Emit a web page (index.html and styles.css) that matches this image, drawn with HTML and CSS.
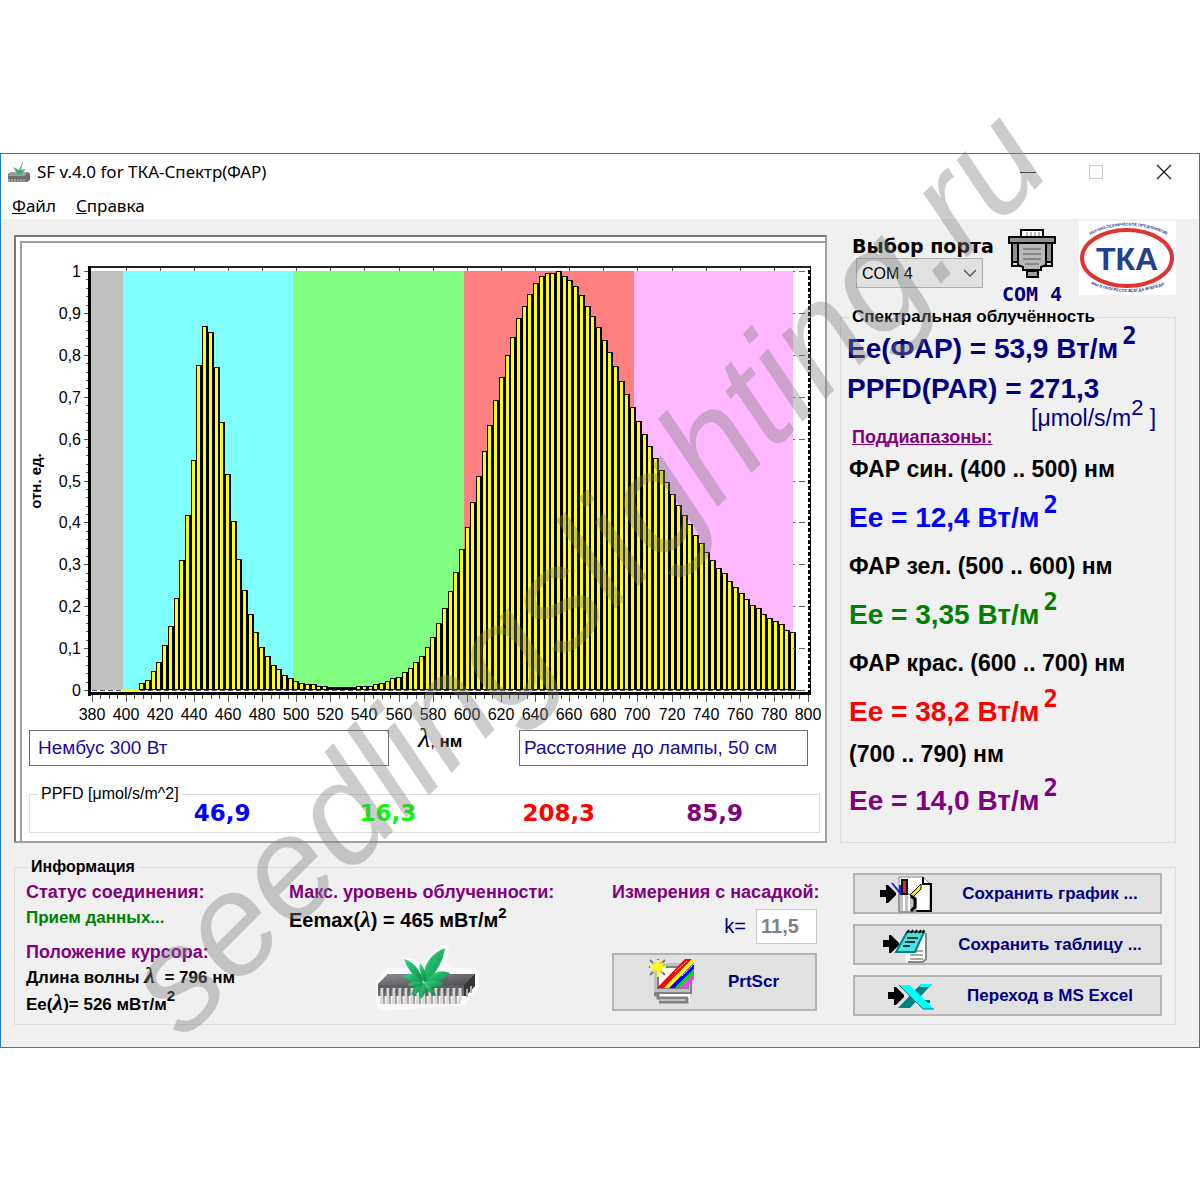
FILE: index.html
```html
<!DOCTYPE html>
<html lang="ru">
<head>
<meta charset="utf-8">
<meta name="viewport" content="width=device-width, initial-scale=1">
<title>SF v.4.0 for ТКА-Спектр(ФАР)</title>
<link rel="stylesheet" href="styles.css">
</head>
<body>
<svg class="defs" width="0" height="0" aria-hidden="true">
  <defs>
    <linearGradient id="chipTop" x1="0" y1="0" x2="1" y2="1"><stop offset="0" stop-color="#8b8d90"/><stop offset="1" stop-color="#4b4d50"/></linearGradient>
    <linearGradient id="chipFront" x1="0" y1="0" x2="0" y2="1"><stop offset="0" stop-color="#3a3c3e"/><stop offset="1" stop-color="#77797c"/></linearGradient>
    <linearGradient id="leaf" x1="0" y1="0" x2="1" y2="1"><stop offset="0" stop-color="#35d584"/><stop offset="1" stop-color="#0a8a48"/></linearGradient>
    <symbol id="arrow" viewBox="0 0 16 18"><path d="M0 5h6V0h2l8 8v2l-8 8H6v-6H0z"/></symbol>
  </defs>
</svg>
<div class="window">
  <header class="titlebar">
    <svg class="app-icon" viewBox="0 0 24 22" aria-hidden="true">
      <path d="M4 11h17l2 2v6l-3 2H1v-8z" fill="#6d7072"/><path d="M4 11h17l-3 4H1z" fill="#9b9ea0"/>
      <path d="M2 21v-3M5 21v-3M8 21v-3M11 21v-3M14 21v-3M17 21v-3" stroke="#c9c9c9"/>
      <path d="M11 14L6 6l6 3 4-9-2 9 5-1-6 6z" fill="#3fae74"/>
    </svg>
    <h1 class="title">SF v.4.0 for ТКА-Спектр(ФАР)</h1>
    <div class="caption-buttons">
      <button class="cap" aria-label="Свернуть"><svg viewBox="0 0 16 16"><path d="M0 8.500h16" stroke="#222"/></svg></button>
      <button class="cap" aria-label="Развернуть" disabled><svg viewBox="0 0 16 16"><path d="M1.500 1.500h13v13h-13z" fill="none" stroke="#c8c8c8"/></svg></button>
      <button class="cap" aria-label="Закрыть"><svg viewBox="0 0 16 16"><path d="M1 1l14 14M15 1L1 15" stroke="#222" stroke-width="1.4"/></svg></button>
    </div>
  </header>
  <nav class="menu"><a href="#file"><u>Ф</u>айл</a><a href="#help"><u>С</u>правка</a></nav>

  <main class="client">
    <section class="chart-panel">
      <div class="chart-inner">
        <svg id="chart" class="chart" viewBox="22 243 803 481" role="img" aria-label="Спектр излучения, отн. ед."></svg>
        <div class="notes">
          <input class="note" type="text" value="Нембус 300 Вт" aria-label="Название лампы">
          <span class="axis-x"><i>λ</i>, <b>нм</b></span>
          <input class="note note-short" type="text" value="Расстояние до лампы, 50 см" aria-label="Комментарий">
        </div>
        <fieldset class="group ppfd">
          <legend>PPFD [μmol/s/m^2]</legend>
          <div class="ppfd-grid">
            <output class="blue">46,9</output><output class="lime">16,3</output><output class="red">208,3</output><output class="purple">85,9</output>
          </div>
        </fieldset>
      </div>
    </section>

    <section class="side">
      <div class="port">
        <div class="port-select">
          <label for="port">Выбор порта</label>
          <div class="select-box">
            <select id="port"><option>COM 4</option></select>
            <svg class="chevron" viewBox="0 0 12 8" aria-hidden="true"><path d="M0 1l6 6 6-6" fill="none" stroke="#555" stroke-width="1.4"/></svg>
          </div>
        </div>
        <div class="port-state">
          <svg class="plug" viewBox="0 0 48 50" aria-hidden="true">
            <path d="M13 1h22v9H13z" fill="#fff" stroke="#000" stroke-width="2"/>
            <path d="M19 3v4M23 3v4M27 3v4M31 3v4" stroke="#777"/>
            <path d="M4 13h7v24H4zM37 13h7v24h-7z" fill="#909090" stroke="#000" stroke-width="2"/>
            <path d="M4 33h7v4H4zM37 33h7v4h-7z" fill="#ddd" stroke="#000" stroke-width="2"/>
            <path d="M10 14h28v22l-5 2v3H15v-3l-5-2z" fill="#b8b8b8" stroke="#000" stroke-width="2"/>
            <path d="M1 8h46v6H1z" fill="#909090" stroke="#000" stroke-width="2"/>
            <path d="M19 42h11v6H19z" fill="#a0a0a0" stroke="#000" stroke-width="2"/>
            <path d="M15 20h18M15 25h18M15 30h18M17 35h14" stroke="#555"/>
          </svg>
          <span>COM 4</span>
        </div>
        <svg class="logo" viewBox="0 0 97 74" role="img" aria-label="ТКА">
          <path d="M0 0h97v74H0z" fill="#fff"/>
          <ellipse cx="48" cy="37" rx="45" ry="28" fill="none" stroke="#e03434" stroke-width="4"/>
          <path id="arcTop" d="M11 14Q48 -5 88 14" fill="none"/>
          <path id="arcBottom" d="M12 63Q48 79 88 63" fill="none"/>
          <text class="logo-small"><textPath href="#arcTop">НАУЧНО-ТЕХНИЧЕСКОЕ ПРЕДПРИЯТИЕ</textPath></text>
          <text class="logo-small"><textPath href="#arcBottom">МЫ В ПРОГРЕССЕ ВСЕГДА ВПЕРЕДИ</textPath></text>
          <text class="logo-name" x="48" y="49" text-anchor="middle">ТКА</text>
        </svg>
      </div>

      <fieldset class="group readings">
        <legend>Спектральная облучённость</legend>
        <p class="main-value">Ee(ФАР) = 53,9 Вт/м<sup>2</sup></p>
        <p class="main-value main-par">PPFD(PAR) = 271,3</p>
        <p class="unit">[μmol/s/m<sup>2</sup> ]</p>
        <h2 class="sub">Поддиапазоны:</h2>
        <dl class="bands">
          <dt>ФАР син. (400 .. 500) нм</dt><dd class="blue">Ee = 12,4 Вт/м<sup>2</sup></dd>
          <dt>ФАР зел. (500 .. 600) нм</dt><dd class="green">Ee = 3,35 Вт/м<sup>2</sup></dd>
          <dt>ФАР крас. (600 .. 700) нм</dt><dd class="red">Ee = 38,2 Вт/м<sup>2</sup></dd>
          <dt class="far">(700 .. 790) нм</dt><dd class="purple">Ee = 14,0 Вт/м<sup>2</sup></dd>
        </dl>
      </fieldset>
    </section>

    <fieldset class="group info">
      <legend>Информация</legend>
      <div class="info-grid">
        <div class="status">
          <h3>Статус соединения:</h3>
          <p class="ok">Прием данных...</p>
          <h3 class="cursor">Положение курсора:</h3>
          <p>Длина волны <i>λ</i>&nbsp; = 796 нм</p>
          <p>Ee(<i>λ</i>)= 526 мВт/м<sup>2</sup></p>
        </div>
        <div class="maximum">
          <h3>Макс. уровень облученности:</h3>
          <p>Eemax(<i>λ</i>) = 465 мВт/м<sup>2</sup></p>
          <svg class="chip" viewBox="0 0 104 68" aria-hidden="true">
            <path d="M1 37l11-14h22L26 12l12 2 8 4L66 0h8l-2 18 6 5h22l4 3v16L90 60 6 66l-5-6z" fill="#fafafa"/>
            <path d="M3 39L13 29h87v10L90 51H3z" fill="url(#chipFront)"/>
            <path d="M13 29h87L89 40H3z" fill="url(#chipTop)"/>
            <path d="M89 40l11-11v12l-9 10h-2z" fill="#343638"/>
            <path d="M92 44v8M96 41v7" stroke="#aaa" stroke-width="2"/>
            <path d="M7 43v10l-1 6M13 43v10l-1 6M19 43v10l-1 6M25 43v10l-1 6M31 43v10l-1 6M37 43v10l-1 6M43 43v10l-1 6M49 43v10l-1 6M55 43v10l-1 6M61 43v10l-1 6M67 43v10l-1 6M73 43v10l-1 6M79 43v10l-1 6M85 43v10l-1 6" fill="none" stroke="#d8d8d8" stroke-width="3"/>
            <path d="M9 44v15M15 44v15M21 44v15M27 44v15M33 44v15M39 44v15M45 44v15M51 44v15M57 44v15M63 44v15M69 44v15M75 44v15M81 44v15" stroke="#555"/>
            <path d="M40 34h20l-3 8H43z" fill="#9fe4e8"/>
            <g fill="url(#leaf)">
              <path d="M48 36Q48 12 70 3Q68 20 52 38z"/><path d="M48 36Q43 18 29 14Q33 27 46 37z"/>
              <path d="M48 38Q38 24 28 31Q36 38 47 40z"/><path d="M51 38Q60 22 75 28Q66 37 52 40z"/>
              <path d="M48 38Q38 41 36 50Q46 48 50 40z"/><path d="M50 37Q64 34 69 39Q60 45 51 40z"/>
              <path d="M49 38Q42 50 46 54Q52 48 51 39z"/><path d="M50 38Q60 44 61 51Q53 48 50 41z"/>
              <path d="M49 37Q43 25 45 18Q52 26 51 36z"/><path d="M48 38Q38 34 32 40Q40 43 48 40z"/>
            </g>
          </svg>
        </div>
        <div class="adapter">
          <h3>Измерения с насадкой:</h3>
          <div class="factor"><label for="k">k=</label><input id="k" type="text" value="11,5"></div>
          <button class="btn btn-print">
            <svg class="print-icon" viewBox="0 0 48 46" aria-hidden="true">
              <path d="M6 35h36v8H12v-5H6z" fill="#fff"/><path d="M6 36h4v3h30M11 43h28v-4" fill="none" stroke="#808080" stroke-width="3"/>
              <path d="M6 4h37v30H6z" fill="#c0c0c0"/><path d="M10 8h30v21H10z" fill="#fff" stroke="#808080" stroke-width="2"/><path d="M43 6v28H6" fill="none" stroke="#808080" stroke-width="2"/>
              <path d="M9 29L37 0h7L16 29z" fill="#f00"/><path d="M16 29L44 0h2v4L21 29z" fill="#ff0"/><path d="M21 29L46 4v6L27 29z" fill="#00f"/><path d="M27 29l19-19v5L31 29z" fill="#0d0"/><path d="M31 29l15-14v5l-9 9z" fill="#f3f"/>
              <path d="M27 13L39 2M34 17L46 5" stroke="#fff" stroke-dasharray="2 1"/>
              <path d="M10 0v18M1 8h18M2 1l15 15M17 1L2 16" stroke="#777" stroke-width="2"/><path d="M10 1v17M2 8h16M5 4l10 9M15 4L5 13" stroke="#ff0" stroke-width="2"/><circle cx="10" cy="8" r="4" fill="#ff0"/>
            </svg>
            <span>PrtScr</span>
          </button>
        </div>
        <div class="actions">
          <button class="btn">
            <svg class="btn-icon" viewBox="0 0 54 38" aria-hidden="true">
              <use href="#arrow" y="10" width="16" height="18"/>
              <path d="M19 2h24l7 7v27H19z" fill="#fff" stroke="#888"/><path d="M43 2v7h8v27H33" fill="none" stroke="#000" stroke-width="2"/>
              <path d="M19 19h12l5 4v14H19z" fill="#c0c0c0" stroke="#777"/><path d="M24 20v16M29 20v16" stroke="#fff" stroke-width="2"/>
              <path d="M22 5h5v14h-5z" fill="#e02040" stroke="#111" stroke-width="2"/><path d="M12 8l8 10V10" fill="none" stroke="#22c" stroke-width="2"/>
              <path d="M30 20L41 9v5l-8 8z" fill="#ee2" stroke="#000"/><path d="M31 21l4 3v8l-4 4" fill="none" stroke="#000" stroke-width="3"/>
            </svg>
            <span>Сохранить график ...</span>
          </button>
          <button class="btn">
            <svg class="btn-icon" viewBox="0 0 54 38" aria-hidden="true">
              <use href="#arrow" x="3" y="9" width="16" height="18"/>
              <path d="M28 8h18v27l-3 2H28l-3-3z" fill="#fff"/><path d="M30 25h13M30 29h13M30 33h13" stroke="#aaa" stroke-width="2"/><path d="M46 7v26l-3 3H28" fill="none" stroke="#888" stroke-width="2"/>
              <path d="M27 6h17l-9 20H16z" fill="#4fe0dc" stroke="#008080" stroke-width="2"/>
              <path d="M27 12h11M25 16h10M23 20h7" stroke="#004040" stroke-width="2"/><path d="M27 7l2-3M31 7l2-3M35 7l2-3M39 7l2-3M43 7l1-3" stroke="#000" stroke-width="2"/>
            </svg>
            <span>Сохранить таблицу ...</span>
          </button>
          <button class="btn">
            <svg class="btn-icon" viewBox="0 0 54 38" aria-hidden="true">
              <use href="#arrow" x="8" y="10" width="16" height="18"/>
              <path d="M41 7h11L30 31H18z" fill="#008080"/><path d="M41 7h11l-3 3H39z" fill="#0ff"/><path d="M43 23h7v3h-5z" fill="#008080"/>
              <path d="M19 8h11l24 24H43z" fill="#0ff"/><path d="M19 8l24 24h11" fill="none" stroke="#087c7c"/>
            </svg>
            <span>Переход в MS Excel</span>
          </button>
        </div>
      </div>
    </fieldset>
  </main>
</div>
<div class="watermark" aria-hidden="true">seedlingslighting.ru</div>
<script src="chart.js"></script>
</body>
</html>
```
FILE: styles.css
```css
* { box-sizing: border-box; }
body {
  margin: 0;
  padding: 153px 0;
  min-height: 1200px;
  position: relative;
  overflow-x: hidden;
  background: #fff;
  color: #000;
  font-family: "Liberation Sans", Arial, sans-serif;
}
h1, h2, h3, p, dl, dd { margin: 0; }
h1, h2, h3 { font-size: inherit; }
button, input, select { font: inherit; }
.defs { position: absolute; }

.window { border: 1px solid #1a7fd6; background: #f0f0f0; }
.titlebar { display: flex; align-items: center; height: 36px; padding: 0 1px 0 6px; background: #fff; }
.app-icon { width: 24px; height: 22px; }
.title { margin-left: 6px; font: 400 17px/24px "Noto Sans", sans-serif; }
.caption-buttons { display: flex; margin-left: auto; }
.cap { width: 68px; height: 36px; padding: 0; border: 0; background: none; }
.cap svg { display: block; width: 16px; height: 16px; margin: auto; }
.menu { display: flex; gap: 20px; height: 29px; padding-left: 11px; background: #fff; font: 17px/32px "Noto Sans", sans-serif; }
.menu a { color: #000; text-decoration: none; }

.client {
  display: grid;
  grid-template-columns: minmax(0, 813fr) minmax(0, 336fr);
  column-gap: 13px;
  row-gap: 14px;
  padding: 0 23px 22px 13px;
}
.group { margin: 0; min-width: 0; border: 1px solid #dcdcdc; padding: 0; }
.group legend { line-height: 20px; }

.chart-panel { margin-top: 16px; border: 2px solid #a0a0a0; border-top-color: #787878; border-left-color: #787878; background: #fff; }
.chart-inner { margin: 4px 0 0 4px; border: solid #a0a0a0; border-width: 2px 0 0 2px; padding-bottom: 8px; }
.chart { display: block; width: 100%; }
.chart text { font-size: 16px; }
.chart .axis-title { font-size: 15px; font-weight: 700; }
.notes { display: grid; grid-template-columns: 360fr 130px 289fr; align-items: start; margin-top: 6px; padding: 0 17px 0 7px; }
.note { width: 100%; height: 36px; padding: 0 8px; border: 1px solid #6d6d6d; background: #fff; color: #1c0a9c; font-size: 19px; }
.note-short { padding: 0 4px; }
.axis-x { padding-left: 29px; font-size: 17px; line-height: 20px; white-space: nowrap; }
.axis-x i { font: italic 28px/16px "Liberation Serif", serif; }
.ppfd { margin: 18px 5px 0 7px; }
.ppfd legend { margin-left: 8px; padding: 0 3px; font-size: 16px; }
.ppfd-grid { display: grid; grid-template-columns: 164fr 166fr 163fr 164fr 133fr; height: 28px; font: 700 23px/18px "DejaVu Sans", sans-serif; }
.ppfd-grid output:first-child { grid-column: 2; }

.blue { color: #00f; }
.lime { color: #0f0; }
.green { color: #008000; }
.red { color: #f00; }
.purple { color: #800080; }

.side { display: flex; flex-direction: column; }
.port { display: flex; height: 88px; padding-left: 12px; }
.port-select { padding-top: 17px; width: 146px; }
.port-select label { display: block; font: 700 19px/20px "DejaVu Sans", sans-serif; white-space: nowrap; }
.select-box { position: relative; width: 127px; margin: 2px 0 0 4px; }
.select-box select { appearance: none; width: 100%; height: 30px; padding: 0 5px; border: 1px solid #adadad; border-radius: 0; background: #e1e1e1; color: #000; font-size: 16px; }
.chevron { position: absolute; right: 7px; top: 11px; width: 12px; height: 8px; }
.port-state { display: flex; flex-direction: column; align-items: center; width: 68px; padding-top: 10px; color: #000080; font: 700 20px/30px "DejaVu Sans Mono", monospace; }
.plug { width: 48px; height: 50px; flex: none; }
.logo { width: 97px; height: 74px; margin: 2px 0 0 auto; }
.logo-small { font-size: 4px; font-weight: 700; fill: #24408e; }
.logo-name { font-size: 32px; font-weight: 700; fill: #24408e; }

.readings { flex: 1; padding: 0 0 0 6px; white-space: nowrap; }
.readings legend { margin-left: 3px; padding: 0 2px; font-size: 17px; font-weight: 700; }
.main-value { color: #000080; font-size: 28px; font-weight: 700; line-height: 44px; }
.main-par { line-height: 36px; }
.main-value sup, .bands sup { margin-left: 4px; font: 700 24px/10px "DejaVu Sans Mono", monospace; vertical-align: 14px; }
.unit { margin-top: -4px; padding-left: 184px; color: #000080; font-size: 23px; line-height: 18px; }
.unit sup { font-size: 22px; line-height: 10px; vertical-align: 11px; }
.sub { margin: 4px 0 2px; padding-left: 5px; color: #800080; font-size: 18px; line-height: 12px; text-decoration: underline; }
.bands { padding-left: 2px; font-weight: 700; }
.bands dt { font-size: 23px; line-height: 48px; }
.bands dd { font-size: 28px; line-height: 49px; }
.bands .far { line-height: 36px; margin-bottom: 4px; }

.info { grid-column: 1 / -1; padding: 0 13px 6px 11px; font-weight: 700; font-size: 17px; }
.info legend { margin-left: 2px; padding: 0 3px; font-size: 16px; }
.info h3, .info p { line-height: 26px; white-space: nowrap; }
.info h3 { color: #800080; font-size: 18px; }
.info i { font: italic 700 24px/16px "Liberation Serif", serif; }
.info sup { font-size: 15px; line-height: 10px; vertical-align: 9px; }
.info-grid { display: grid; grid-template-columns: minmax(0, 263fr) minmax(0, 323fr) minmax(0, 205fr) minmax(0, 345fr); }
.status, .maximum, .adapter { padding-top: 2px; }
.info .ok { color: #008000; }
.info .cursor { margin-top: 8px; }
.info .maximum p { font-size: 20px; line-height: 30px; }
.chip { display: block; width: 104px; height: 68px; margin: 10px 0 0 86px; }
.factor { display: flex; justify-content: flex-end; align-items: center; gap: 10px; margin-top: 4px; color: #000080; font-size: 20px; font-weight: 400; }
.factor input { width: 61px; height: 35px; padding: 0 4px; border: 1px solid #ccc; background: #fff; color: #808080; font-size: 20px; font-weight: 700; }
.btn { display: flex; align-items: center; width: 100%; height: 41px; padding: 0; border: 2px solid #b4b4b4; background: #e1e1e1; color: #000080; font-weight: 700; white-space: nowrap; }
.btn-print { height: 58px; margin-top: 9px; padding-left: 34px; }
.print-icon { flex: none; width: 48px; height: 46px; }
.btn-print span { margin-left: 32px; }
.actions { display: flex; flex-direction: column; gap: 10px; margin-top: -4px; padding-left: 36px; }
.actions .btn-icon { flex: none; width: 54px; height: 38px; margin-left: 25px; }
.actions span { flex: 1; padding-left: 6px; text-align: center; }

/* Site mark laid diagonally over the whole page */
.watermark {
  position: absolute;
  left: 50%;
  top: 570px;
  margin-left: -15px;
  transform: translate(-50%, -50%) rotate(-45deg);
  color: rgba(128, 128, 128, 0.4);
  font: italic 144px/1 "Liberation Sans", Arial, sans-serif;
  white-space: nowrap;
  pointer-events: none;
}
```
FILE: chart.js
```js
// Top edge of every bar, one per 3.3 nm starting at 408 nm
const tops = [
  683, 680, 671, 662, 645, 626, 598, 560, 515, 460, 365, 326, 332, 367, 422, 474, 521, 559, 590, 614,
  632, 647, 656, 665, 669, 675, 678, 681, 683, 684, 684, 686, 686, 687, 687, 687, 687, 687, 686, 686,
  686, 684, 683, 681, 678, 677, 672, 668, 662, 656, 647, 637, 623, 608, 591, 572, 549, 527, 502, 476,
  451, 425, 400, 377, 355, 337, 318, 306, 294, 283, 276, 273, 273, 271, 276, 280, 286, 295, 306, 316,
  327, 340, 352, 366, 381, 394, 407, 421, 434, 446, 458, 470, 482, 494, 505, 515, 524, 535, 543, 552,
  560, 568, 573, 581, 587, 593, 599, 605, 608, 614, 618, 621, 624, 630, 632
];
const base = 690;
const out = [];
const rect = (x, y, w, h, fill) => out.push(`<rect x="${x}" y="${y}" width="${w}" height="${h}" fill="${fill}"/>`);

// Spectral bands
rect(91, 271, 32, 419, '#c0c0c0');
rect(123, 271, 170, 419, '#80ffff');
rect(293, 271, 171, 419, '#80ff80');
rect(464, 271, 170, 419, '#ff8080');
rect(634, 271, 159, 419, '#ffb8ff');

// Bars
tops.forEach((y, i) => {
  const x = Math.round(139.3 + i * 5.708);
  rect(x, y, 6, base - y, '#000');
  if (base - y > 3) rect(x + 1, y + 1, 3, base - y - 2, '#ff0');
});

// Frame and zero line
rect(88, 266, 723, 2, '#222');
rect(88, 266, 3, 430, '#000');
rect(88, 692, 723, 3, '#000');
rect(810, 266, 1, 429, '#000');
out.push('<path d="M809 270V692" stroke="#000" stroke-width="2" stroke-dasharray="4 2"/>');
out.push('<path d="M92 690.5H804" stroke="#fff"/><path d="M92 690.5H804" stroke="#555" stroke-dasharray="5 3"/>');
rect(123, 690, 17, 1, '#ff0');

// Horizontal scale
for (let i = 0; i <= 84; i++) {
  const x = Math.round(91.5 + i * 34.12 / 4);
  rect(x, 695, 1, i % 4 ? 4 : 7, '#555');
  if (i % 4 === 0) {
    if (i && i < 84) rect(x, 268, 1, 3, '#555');
    out.push(`<text x="${x}" y="720" text-anchor="middle">${380 + i * 5}</text>`);
  }
}
// Vertical scale
for (let i = 0; i <= 50; i++) {
  const y = Math.round(base - i * 8.38);
  rect(i % 5 ? 86 : 84, y, i % 5 ? 2 : 4, 1, '#555');
  if (i % 5 === 0) {
    const n = i / 50;
    out.push(`<text x="81" y="${y + 6}" text-anchor="end">${String(n).replace('.', ',')}</text>`);
    out.push(`<path d="M793 ${y + 0.5}h12" stroke="#666" stroke-dasharray="2 4 6"/>`);
  }
}
out.push('<text class="axis-title" transform="translate(41 481) rotate(-90)" text-anchor="middle">отн. ед.</text>');
document.getElementById('chart').innerHTML = out.join('');
```
